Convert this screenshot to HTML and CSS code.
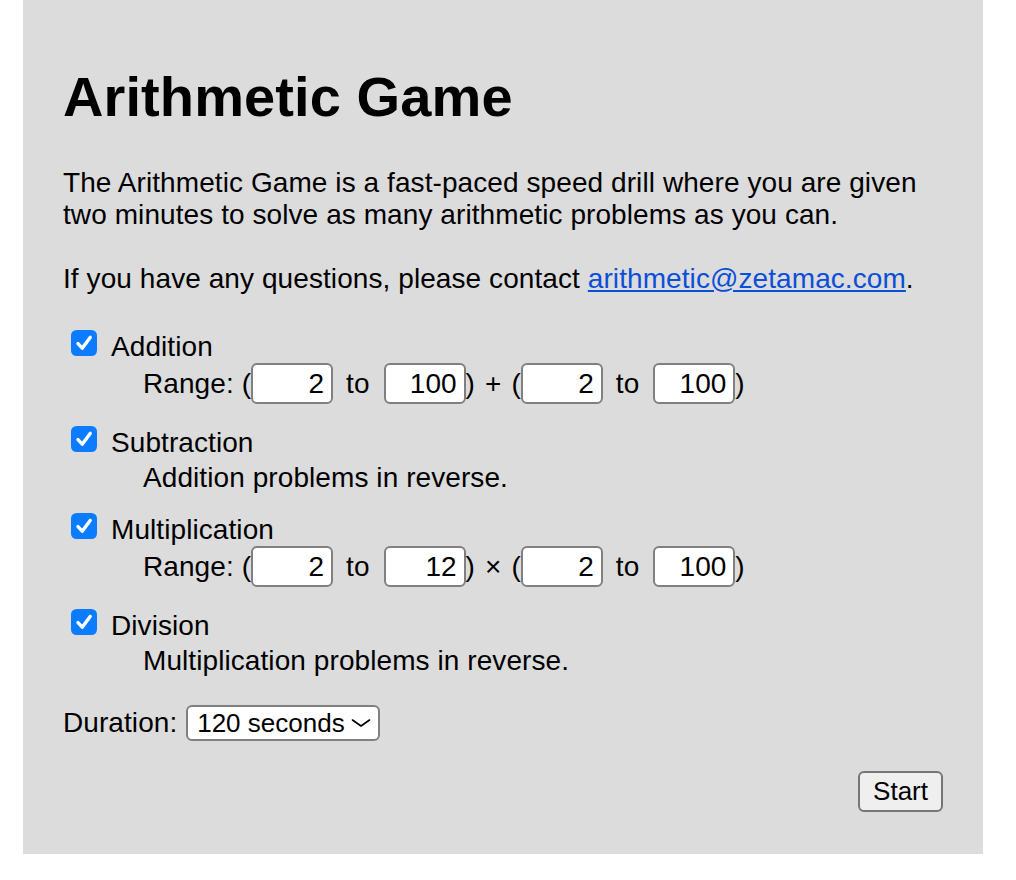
FILE: index.html
```html
<!DOCTYPE html>
<html lang="en">
<head>
<meta charset="utf-8">
<title>Arithmetic Game</title>
<link rel="stylesheet" href="styles.css">
</head>
<body>
<div class="panel">
  <h1 class="title">Arithmetic Game</h1>
  <p class="intro">The Arithmetic Game is a fast-paced speed drill where you are given two minutes to solve as many arithmetic problems as you can.</p>
  <p class="intro">If you have any questions, please contact <a class="mail" href="#">arithmetic@zetamac.com</a>.</p>

  <div class="ops">
    <div class="op">
      <label class="op-head"><span class="cb"><svg viewBox="0 0 26 26" width="26" height="26"><rect x="0" y="0" width="26" height="26" rx="5.5" fill="#0b7bff"/><path d="M7 13.6 L11.2 18.2 L19.2 7.4" fill="none" stroke="#fff" stroke-width="3.4" stroke-linecap="round" stroke-linejoin="round"/></svg></span>Addition</label>
      <div class="op-detail">Range: (<input class="num" type="text" value="2"><span class="to">to</span><input class="num" type="text" value="100">)<span class="sym">+</span>(<input class="num" type="text" value="2"><span class="to">to</span><input class="num" type="text" value="100">)</div>
    </div>
    <div class="op op-text">
      <label class="op-head"><span class="cb"><svg viewBox="0 0 26 26" width="26" height="26"><rect x="0" y="0" width="26" height="26" rx="5.5" fill="#0b7bff"/><path d="M7 13.6 L11.2 18.2 L19.2 7.4" fill="none" stroke="#fff" stroke-width="3.4" stroke-linecap="round" stroke-linejoin="round"/></svg></span>Subtraction</label>
      <div class="op-detail">Addition problems in reverse.</div>
    </div>
    <div class="op">
      <label class="op-head"><span class="cb"><svg viewBox="0 0 26 26" width="26" height="26"><rect x="0" y="0" width="26" height="26" rx="5.5" fill="#0b7bff"/><path d="M7 13.6 L11.2 18.2 L19.2 7.4" fill="none" stroke="#fff" stroke-width="3.4" stroke-linecap="round" stroke-linejoin="round"/></svg></span>Multiplication</label>
      <div class="op-detail">Range: (<input class="num" type="text" value="2"><span class="to">to</span><input class="num" type="text" value="12">)<span class="sym">×</span>(<input class="num" type="text" value="2"><span class="to">to</span><input class="num" type="text" value="100">)</div>
    </div>
    <div class="op op-text">
      <label class="op-head"><span class="cb"><svg viewBox="0 0 26 26" width="26" height="26"><rect x="0" y="0" width="26" height="26" rx="5.5" fill="#0b7bff"/><path d="M7 13.6 L11.2 18.2 L19.2 7.4" fill="none" stroke="#fff" stroke-width="3.4" stroke-linecap="round" stroke-linejoin="round"/></svg></span>Division</label>
      <div class="op-detail">Multiplication problems in reverse.</div>
    </div>
  </div>

  <div class="duration">Duration: <select class="dur-select"><option>120 seconds</option></select></div>

  <div class="actions"><button class="start" type="button">Start</button></div>
</div>
</body>
</html>
```
FILE: styles.css
```css
html, body {
  margin: 0;
  padding: 0;
  background: #ffffff;
}

body {
  font-family: "Liberation Sans", Arial, Helvetica, sans-serif;
  font-size: 28px;
  line-height: 32px;
  letter-spacing: 0.08px;
  color: #000;
}

.panel {
  box-sizing: border-box;
  width: 960px;
  margin-left: 23px;
  padding: 65px 40px 42px;
  background: #dcdcdc;
}

.title {
  margin: 0 0 38px;
  font-size: 56px;
  line-height: 64px;
  font-weight: bold;
  letter-spacing: 0.1px;
}

.intro {
  margin: 0 0 32px;
}

.mail {
  color: #0a4fd8;
  text-decoration: underline;
}

.ops {
  margin-top: 35px;
}

.op {
  margin-bottom: 22px;
}

.op-text {
  margin-bottom: 19px;
}

.op-text .op-detail {
  padding-top: 3px;
}

.op-head {
  display: block;
}

.cb {
  display: inline-block;
  width: 26px;
  height: 26px;
  margin: 0 14px 0 8px;
  vertical-align: baseline;
}

.cb svg {
  display: block;
}

.op-detail {
  padding-left: 80px;
}

.num {
  box-sizing: border-box;
  width: 82px;
  height: 41px;
  margin: 0;
  padding: 2px 7px 2px 4px;
  border: 2px solid #808080;
  border-radius: 6px;
  background: #fff;
  font: inherit;
  line-height: 32px;
  text-align: right;
  color: #000;
  vertical-align: baseline;
}

.to {
  padding: 0 14px 0 13px;
}

.sym {
  padding: 0 10px;
}

.duration {
  margin-top: 28px;
}

.dur-select {
  box-sizing: border-box;
  -webkit-appearance: none;
  appearance: none;
  width: 194px;
  height: 36px;
  margin: 0 0 0 1px;
  padding: 0 28px 0 9px;
  border: 2px solid #808080;
  border-radius: 6px;
  background-color: #fff;
  background-image: url("data:image/svg+xml;utf8,<svg xmlns='http://www.w3.org/2000/svg' width='20' height='8' viewBox='0 0 20 8'><path d='M1.5 1 L10 7 L18.5 1' fill='none' stroke='%23000' stroke-width='1.6' stroke-linecap='round' stroke-linejoin='round'/></svg>");
  background-repeat: no-repeat;
  background-position: right 7px center;
  font-family: inherit;
  font-size: 26px;
  line-height: 30px;
  color: #000;
}

.actions {
  margin-top: 30px;
  text-align: right;
}

.start {
  box-sizing: border-box;
  height: 41px;
  padding: 0 13px;
  border: 2px solid #767676;
  border-radius: 6px;
  background: #efefef;
  font-family: inherit;
  font-size: 26px;
  line-height: 35px;
  color: #000;
  vertical-align: top;
}
```
